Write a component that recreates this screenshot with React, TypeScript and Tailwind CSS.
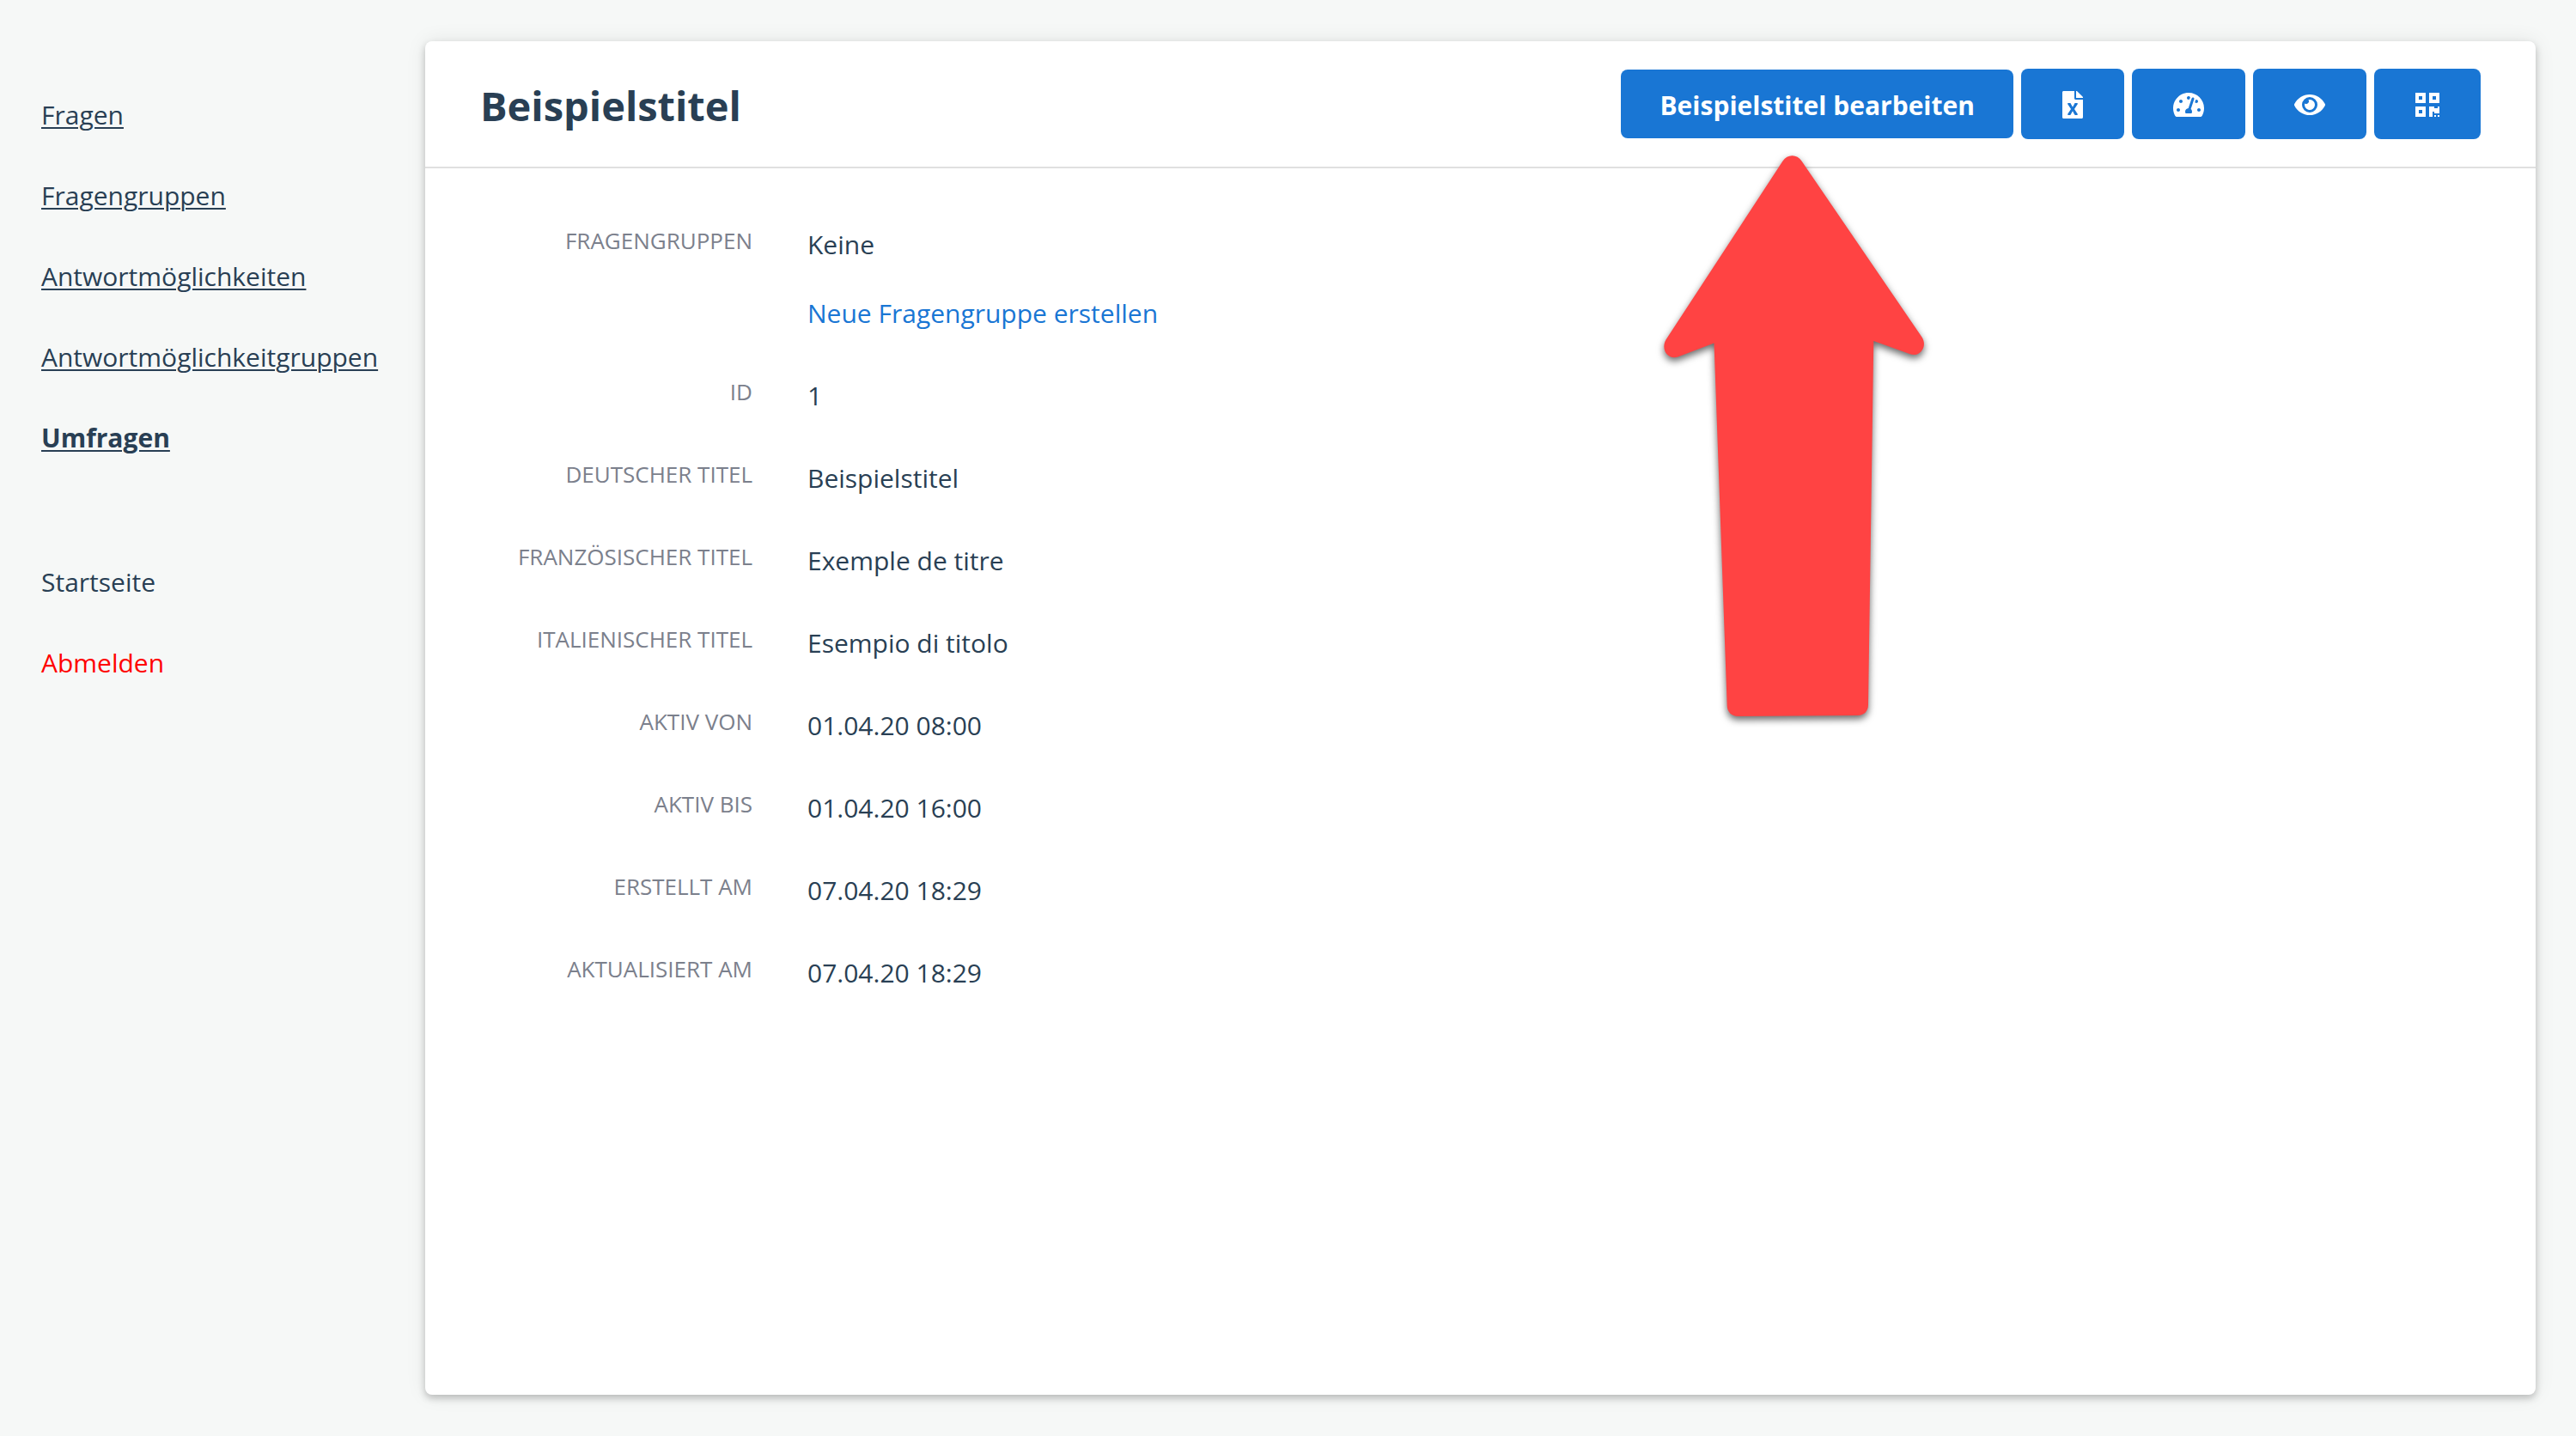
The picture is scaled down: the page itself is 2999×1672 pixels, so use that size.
import type { ReactNode } from "react";
import { FaEye, FaFileExcel, FaQrcode, FaTachometerAlt } from "react-icons/fa";

const resources = ["Fragen", "Fragengruppen", "Antwortmöglichkeiten", "Antwortmöglichkeitgruppen", "Umfragen"];

const attributes = [
  { label: "ID", value: "1" },
  { label: "Deutscher Titel", value: "Beispielstitel" },
  { label: "Französischer Titel", value: "Exemple de titre" },
  { label: "Italienischer Titel", value: "Esempio di titolo" },
  { label: "Aktiv von", value: "01.04.20 08:00" },
  { label: "Aktiv bis", value: "01.04.20 16:00" },
  { label: "Erstellt am", value: "07.04.20 18:29" },
  { label: "Aktualisiert am", value: "07.04.20 18:29" },
];

const actions = [
  { label: "Excel-Export", icon: FaFileExcel, size: "w-6" },
  { label: "Dashboard", icon: FaTachometerAlt, size: "w-9" },
  { label: "Vorschau", icon: FaEye, size: "w-9" },
  { label: "QR-Code", icon: FaQrcode, size: "w-7" },
];

function Arrow() {
  return (
    <svg
      aria-hidden="true"
      viewBox="0 0 304 654"
      className="pointer-events-none absolute top-[100px] left-[50px] z-10 w-[304px] overflow-visible drop-shadow-[0_4px_4px_rgba(0,0,0,0.6)]"
    >
      <path
        fill="#ff4343"
        d="M138.5 6.5 C144 -2 155 -2 160.500 6.500 L300.500 211.500 C308 223 297 236 286 231 L244.300 216 L238 640 C238 647 233 652 226 652 L86 653 C79 653 74 648 73.700 641 L58.500 218.500 L16.500 234.500 C5 238.500 -4 226 2.500 214.500 Z"
      />
    </svg>
  );
}

function Sidebar() {
  return (
    <nav className="w-[495px] shrink-0 pt-[110px] pl-12">
      <ul className="flex flex-col gap-[46px]">
        {resources.map((name) => (
          <li key={name}>
            <a
              href="#"
              className={
                name === "Umfragen"
                  ? "font-bold underline decoration-2 underline-offset-[3px]"
                  : "underline decoration-2 underline-offset-[3px]"
              }
            >
              {name}
            </a>
          </li>
        ))}
      </ul>
      <ul className="mt-[120px] flex flex-col gap-[46px]">
        <li>
          <a href="#">Startseite</a>
        </li>
        <li>
          <a href="#" className="text-[#ff0000]">
            Abmelden
          </a>
        </li>
      </ul>
    </nav>
  );
}

function Row({ label, children }: { label: string; children: ReactNode }) {
  return (
    <div className="flex gap-16">
      <dt className="w-[317px] shrink-0 text-right text-[26px] leading-10 text-[#7b808c] uppercase">{label}</dt>
      <dd className="flex flex-col gap-[30px] leading-[50px]">{children}</dd>
    </div>
  );
}

export default function App() {
  return (
    <div className="flex min-h-screen bg-[#f6f8f7] font-['Open_Sans',sans-serif] text-[30px] leading-[48px] text-[#293f54]">
      <Sidebar />
      <main className="my-12 mr-[47px] flex-1 rounded-lg bg-white shadow-[0_0_24px_rgba(0,0,0,0.08),0_4px_8px_rgba(0,0,0,0.22)]">
        <header className="flex items-center justify-between border-b-2 border-[#e0e0e0] px-16 py-8">
          <h1 className="pt-1 text-[47px] leading-[60px] font-bold">Beispielstitel</h1>
          <div className="flex items-center gap-[9px]">
            <div className="relative">
              <a
                href="#"
                className="block rounded-lg bg-[#1976d4] px-[45px] pt-[17px] pb-[13px] leading-[50px] font-bold text-white"
              >
                Beispielstitel bearbeiten
              </a>
              <Arrow />
            </div>
            {actions.map(({ label, icon: Icon, size }) => (
              <button
                key={label}
                type="button"
                aria-label={label}
                className="flex h-[82px] items-center rounded-lg bg-[#1976d4] px-12 pt-0.5 text-white"
              >
                <Icon className={`h-8 ${size}`} />
              </button>
            ))}
          </div>
        </header>
        <dl className="flex flex-col gap-[46px] px-16 py-16">
          <Row label="Fragengruppen">
            <span>Keine</span>
            <a href="#" className="text-[#1976d4]">
              Neue Fragengruppe erstellen
            </a>
          </Row>
          {attributes.map(({ label, value }) => (
            <Row key={label} label={label}>
              {value}
            </Row>
          ))}
        </dl>
      </main>
    </div>
  );
}
